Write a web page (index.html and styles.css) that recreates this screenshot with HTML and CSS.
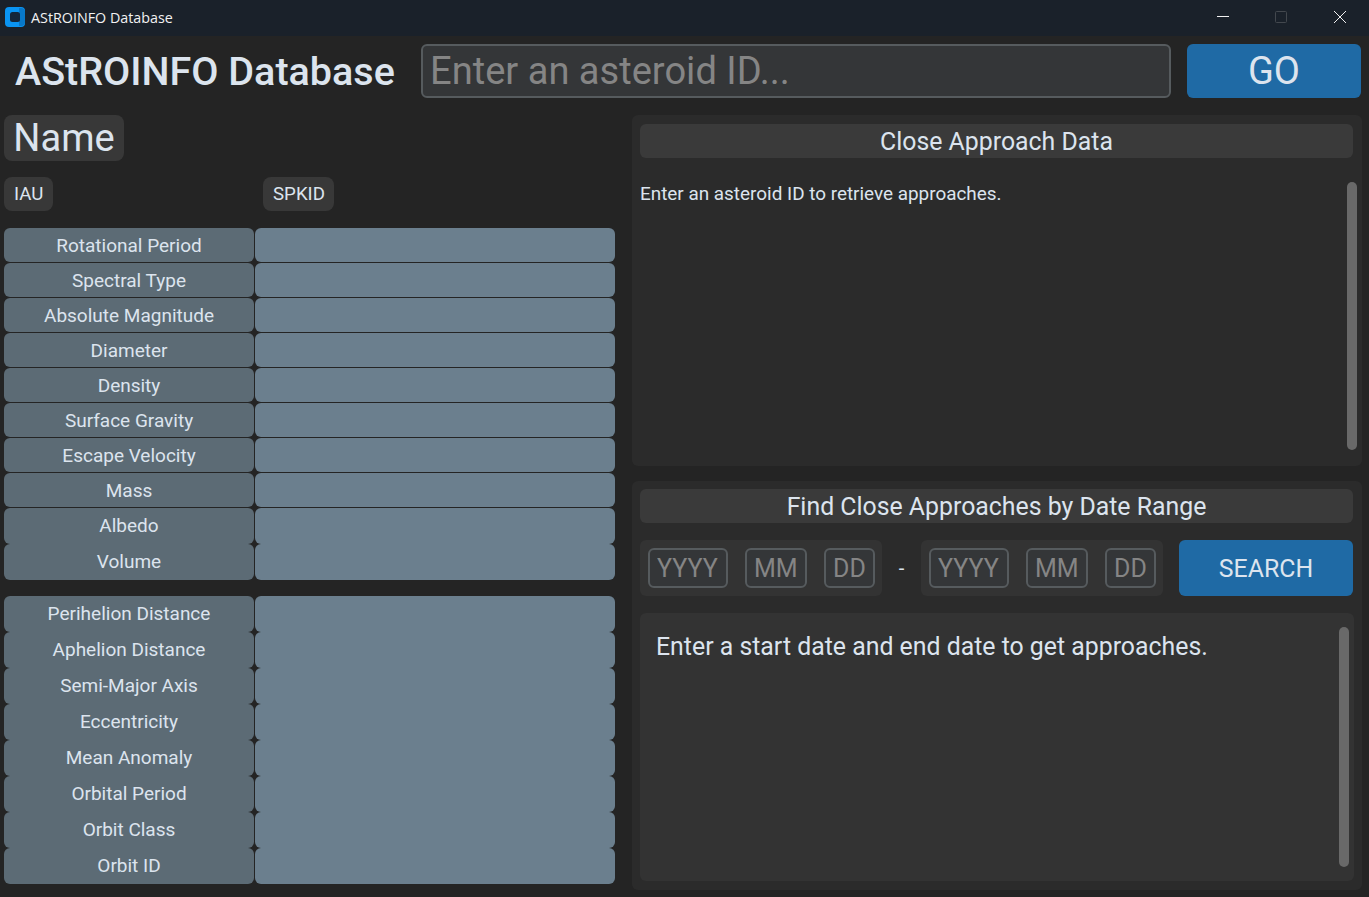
FILE: index.html
```html
<!DOCTYPE html>
<html>

<head>
    <meta name="viewport" content="width=device-width, initial-scale=1.0">
    <title>AStROINFO Database</title>
    <link rel="stylesheet" href="styles.css">
</head>

<body>
    <header class="titlebar">
        <svg class="app-icon" width="20" height="20" viewBox="0 0 20 20">
            <rect width="20" height="20" rx="4" fill="#0a94f2"/>
            <path d="M14 1h2a4 4 0 0 1 4 4v10a4 4 0 0 1-4 4h-2z" fill="#0878c8"/>
            <rect x="5" y="5" width="10" height="10" rx="2.5" fill="#14263a"/>
        </svg>
        <span class="app-name">AStROINFO Database</span>
        <div class="win-btns">
            <svg width="14" height="14" viewBox="0 0 14 14"><path d="M1 6.5h12" stroke="#f0f0f0" fill="none"/></svg>
            <svg width="14" height="14" viewBox="0 0 14 14"><rect x="1.5" y="1.5" width="11" height="11" rx="1" stroke="#43484e" fill="none"/></svg>
            <svg width="14" height="14" viewBox="0 0 14 14"><path d="M1 1l12 12M13 1L1 13" stroke="#f0f0f0" fill="none"/></svg>
        </div>
    </header>

    <section class="topbar">
        <h1 class="app-title">AStROINFO Database</h1>
        <input class="id-entry" type="text" placeholder="Enter an asteroid ID...">
        <button class="btn go-btn">GO</button>
    </section>

    <main class="content">
        <section class="left">
            <div class="name-chip">Name</div>
            <div class="id-row">
                <div class="id-slot"><span class="id-chip">IAU</span></div>
                <div class="id-slot"><span class="id-chip">SPKID</span></div>
            </div>

            <div class="stats physical">
                <div class="stat"><div class="key">Rotational Period</div><div class="val"></div></div>
                <div class="stat"><div class="key">Spectral Type</div><div class="val"></div></div>
                <div class="stat"><div class="key">Absolute Magnitude</div><div class="val"></div></div>
                <div class="stat"><div class="key">Diameter</div><div class="val"></div></div>
                <div class="stat"><div class="key">Density</div><div class="val"></div></div>
                <div class="stat"><div class="key">Surface Gravity</div><div class="val"></div></div>
                <div class="stat"><div class="key">Escape Velocity</div><div class="val"></div></div>
                <div class="stat"><div class="key">Mass</div><div class="val"></div></div>
                <div class="stat tall"><div class="key">Albedo</div><div class="val"></div></div>
                <div class="stat tall"><div class="key">Volume</div><div class="val"></div></div>
            </div>

            <div class="stats orbit">
                <div class="stat tall"><div class="key">Perihelion Distance</div><div class="val"></div></div>
                <div class="stat tall"><div class="key">Aphelion Distance</div><div class="val"></div></div>
                <div class="stat tall"><div class="key">Semi-Major Axis</div><div class="val"></div></div>
                <div class="stat tall"><div class="key">Eccentricity</div><div class="val"></div></div>
                <div class="stat tall"><div class="key">Mean Anomaly</div><div class="val"></div></div>
                <div class="stat tall"><div class="key">Orbital Period</div><div class="val"></div></div>
                <div class="stat tall"><div class="key">Orbit Class</div><div class="val"></div></div>
                <div class="stat tall"><div class="key">Orbit ID</div><div class="val"></div></div>
            </div>
        </section>

        <section class="right">
            <div class="panel approach-panel">
                <div class="panel-head">Close Approach Data</div>
                <div class="approach-body">
                    <p class="approach-text">Enter an asteroid ID to retrieve approaches.</p>
                    <div class="scroll-thumb"></div>
                </div>
            </div>

            <div class="panel range-panel">
                <div class="panel-head">Find Close Approaches by Date Range</div>
                <div class="date-row">
                    <div class="date-box">
                        <input class="date-entry yyyy" type="text" placeholder="YYYY">
                        <input class="date-entry mm" type="text" placeholder="MM">
                        <input class="date-entry dd" type="text" placeholder="DD">
                    </div>
                    <span class="dash">-</span>
                    <div class="date-box">
                        <input class="date-entry yyyy" type="text" placeholder="YYYY">
                        <input class="date-entry mm" type="text" placeholder="MM">
                        <input class="date-entry dd" type="text" placeholder="DD">
                    </div>
                    <button class="btn search-btn">SEARCH</button>
                </div>
                <div class="range-body">
                    <p class="range-text">Enter a start date and end date to get approaches.</p>
                    <div class="scroll-thumb"></div>
                </div>
            </div>
        </section>
    </main>
</body>

</html>
```

FILE: styles.css
```css
* {
    box-sizing: border-box;
}

html, body {
    margin: 0;
    height: 897px;
    overflow: hidden;
}

body {
    background: #242424;
    color: #dce4ee;
    font-family: Roboto, sans-serif;
}

/* window title bar */
.titlebar {
    height: 36px;
    background: #1a212a;
    display: flex;
    align-items: center;
    padding-left: 5px;
}

.app-icon {
    margin-top: -2px;
}

.app-name {
    margin-left: 6px;
    margin-top: -1px;
    font-family: "Open Sans", sans-serif;
    font-size: 14.3px;
    color: #f2f2f2;
}

.win-btns {
    margin-left: auto;
    display: flex;
    gap: 44px;
    padding-right: 22px;
    margin-top: -2px;
}

.win-btns svg:last-child {
    margin-left: 1px;
}

/* top row */
.topbar {
    height: 79px;
    display: flex;
    align-items: flex-start;
    padding-top: 8px;
    padding-left: 15px;
}

.app-title {
    margin: 0;
    width: 406px;
    height: 54px;
    line-height: 56px;
    font-size: 39.5px;
    font-weight: 500;
    white-space: nowrap;
}

.id-entry {
    width: 750px;
    height: 54px;
    background: #343638;
    border: 2px solid #565b5e;
    border-radius: 6px;
    padding: 0 7px;
    font-family: Roboto, sans-serif;
    font-size: 38.1px;
    color: #dce4ee;
}

input::placeholder {
    color: #858585;
    opacity: 1;
}

.btn {
    border: 0;
    background: #1f6aa5;
    color: #dce4ee;
    border-radius: 6px;
    font-family: Roboto, sans-serif;
    padding: 0;
}

.go-btn {
    width: 174px;
    height: 54px;
    margin-left: 16px;
    font-size: 38px;
}

.content {
    display: flex;
    padding-left: 4px;
}

/* left column */
.left {
    width: 611px;
}

.name-chip {
    width: 120px;
    height: 46px;
    line-height: 47px;
    background: #383838;
    border-radius: 8px;
    text-align: center;
    font-size: 38px;
}

.id-row {
    display: flex;
    margin-top: 16px;
    height: 34px;
}

.id-slot {
    width: 259px;
}

.id-chip {
    display: inline-block;
    height: 34px;
    line-height: 35px;
    padding: 0 9.5px 0 10px;
    background: #383838;
    border-radius: 8px;
    font-size: 18.7px;
}

.physical {
    margin-top: 17px;
}

.orbit {
    margin-top: 16px;
}

.stat {
    display: flex;
    gap: 1px;
    height: 34px;
    margin-bottom: 1px;
}

.stat.tall {
    height: 36px;
    margin-bottom: 0;
}

.key {
    width: 250px;
    background: #5c6b75;
    border-radius: 6px;
    text-align: center;
    font-size: 19px;
    line-height: 35px;
}

.tall .key {
    line-height: 36px;
}

.val {
    width: 360px;
    background: #6b7f8e;
    border-radius: 6px;
}

/* right column */
.right {
    width: 730px;
    margin-left: 17px;
}

.panel {
    background: #2b2b2b;
    border-radius: 6px;
    padding: 8px 8px 0;
}

.approach-panel {
    height: 351px;
    padding-top: 9px;
}

.range-panel {
    height: 409px;
    margin-top: 15px;
}

.panel-head {
    height: 34px;
    line-height: 36px;
    width: 713px;
    background: #3a3a3a;
    border-radius: 6px;
    text-align: center;
    font-size: 24.85px;
}

.approach-body {
    display: flex;
    justify-content: space-between;
    padding-top: 24px;
}

.approach-text {
    margin: 0;
    font-size: 18.9px;
    line-height: 24px;
}

.scroll-thumb {
    width: 10px;
    background: #696969;
    border-radius: 5px;
}

.approach-body .scroll-thumb {
    height: 268px;
    margin-right: -3px;
}

.date-row {
    display: flex;
    align-items: center;
    margin-top: 17px;
    height: 56px;
}

.date-box {
    width: 242px;
    height: 56px;
    background: #333333;
    border-radius: 6px;
    padding: 8px;
    display: flex;
    gap: 17px;
}

.date-entry {
    height: 40px;
    background: #343638;
    border: 2px solid #565b5e;
    border-radius: 6px;
    padding: 0 0 0 7px;
    font-family: Roboto, sans-serif;
    font-size: 25px;
    color: #dce4ee;
}

.yyyy {
    width: 80px;
}

.mm {
    width: 62px;
}

.dd {
    width: 51px;
}

.dash {
    width: 39px;
    text-align: center;
    font-size: 20px;
}

.search-btn {
    width: 174px;
    height: 56px;
    margin-left: 16px;
    font-size: 24.85px;
}

.range-body {
    margin-top: 17px;
    width: 714px;
    height: 268px;
    background: #333333;
    border-radius: 6px;
    display: flex;
    justify-content: space-between;
    padding: 14px 5px 14px 16px;
}

.range-text {
    margin: 0;
    font-size: 24.85px;
    line-height: 40px;
}

.range-body .scroll-thumb {
    height: 240px;
}
```
